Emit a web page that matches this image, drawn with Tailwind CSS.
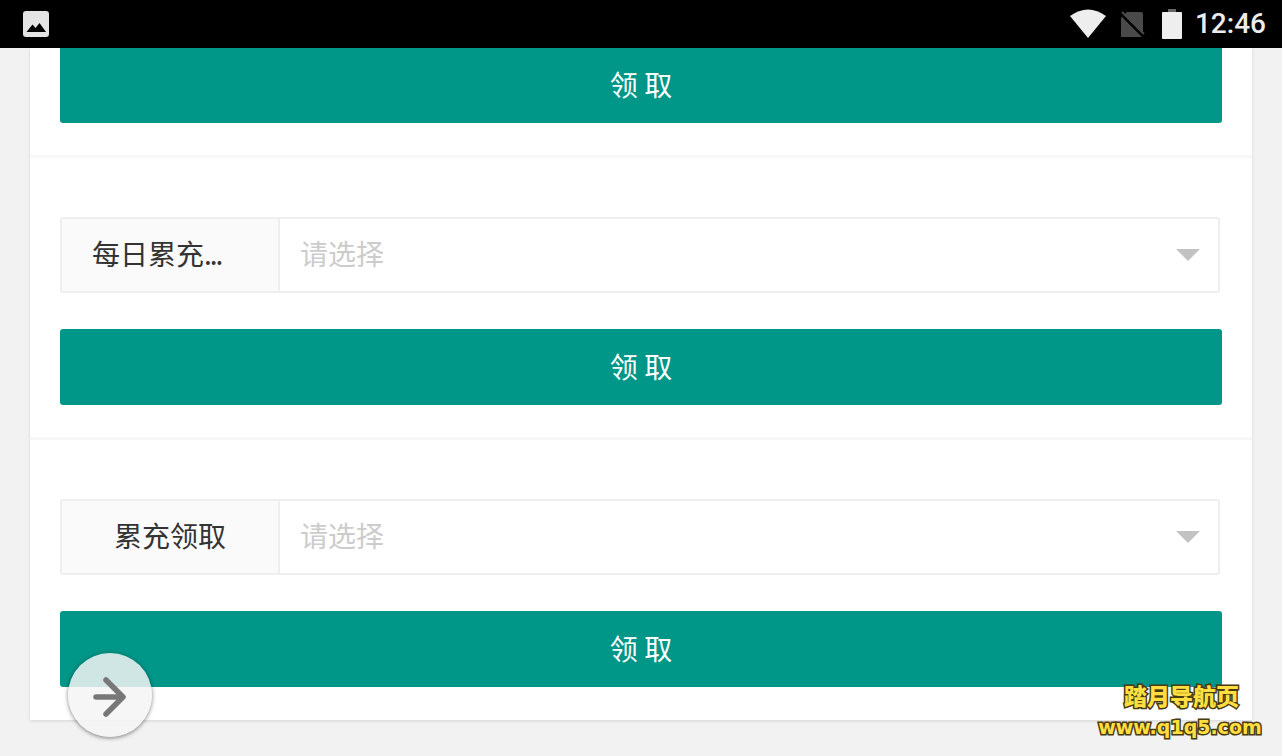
<!DOCTYPE html>
<html lang="en">

<head>
    <meta charset="UTF-8">
    <meta name="viewport" content="width=device-width, initial-scale=1.0">
    <title>领取</title>
    <script src="https://cdn.jsdelivr.net/npm/@tailwindcss/browser@4"></script>
</head>

<body class="bg-[#f2f2f2] h-[756px] overflow-hidden relative font-['Noto_Sans_CJK_SC',sans-serif]">
    <!-- status bar -->
    <div class="h-12 bg-black flex items-center pl-[23px] pr-4 relative z-10">
        <svg width="26" height="26" viewBox="0 0 26 26">
            <rect x="0" y="0" width="26" height="26" rx="3" fill="#e4e4e4" />
            <path d="M3.5 21 L9.5 13.5 L12.5 17 L16.5 12 L23 21 Z" fill="#000" />
        </svg>
        <svg class="ml-auto" width="36" height="30" viewBox="0 0 36 30">
            <path d="M0 7 Q18 -6 36 7 L18 29 Z" fill="#eeeeee" />
        </svg>
        <svg class="ml-[13px]" width="26" height="27" viewBox="0 0 26 27">
            <path d="M8 1 H22 Q24 1 24 3 V26 H2 V7 Z" fill="#4a4a4a" />
            <path d="M1 2 L25 26" stroke="#000" stroke-width="3" />
            <path d="M3 1 L25 23" stroke="#4a4a4a" stroke-width="2" />
        </svg>
        <svg class="ml-[17px]" width="20" height="30" viewBox="0 0 20 30">
            <path d="M6 0 H14 V3 H19 Q20 3 20 4 V29 Q20 30 19 30 H1 Q0 30 0 29 V4 Q0 3 1 3 H6 Z" fill="#eeeeee" />
            <rect x="6" y="0" width="8" height="3" fill="#666" />
        </svg>
        <span class="ml-[13px] text-[28px] leading-none text-[#ececec] font-medium font-['Roboto',sans-serif]">12:46</span>
    </div>

    <div class="mx-[30px] flex flex-col gap-[3px] bg-[#f7f7f7] shadow-[0_1px_3px_rgba(0,0,0,0.12)]">
        <div class="bg-white px-[30px] pb-8">
            <button class="w-[1162px] h-[75px] pb-[3px] bg-[#009688] rounded-b-[3px] text-white text-[28px]">领 取</button>
        </div>

        <div class="bg-white pl-[30px] pt-[59px] pb-8">
            <div class="flex w-[1160px] h-[76px] border-2 border-[#eeeeee] rounded-[3px]">
                <div class="w-[218px] pb-1 bg-[#fafafa] border-r-2 border-[#eeeeee] pl-[30px] flex items-center text-[28px] text-[#333]">每日累充<span class="tracking-[-2px]">...</span></div>
                <div class="flex-1 flex items-center pl-5 pr-[18px]">
                    <input readonly placeholder="请选择" class="flex-1 pb-1 text-[28px] placeholder-[#cccccc] outline-none">
                    <div class="w-0 h-0 border-x-12 border-x-transparent border-t-12 border-t-[#c2c2c2]"></div>
                </div>
            </div>
            <button class="mt-9 w-[1162px] h-[76px] pb-[3px] bg-[#009688] rounded-[3px] text-white text-[28px]">领 取</button>
        </div>

        <div class="bg-white pl-[30px] pt-[59px] pb-[33px]">
            <div class="flex w-[1160px] h-[76px] border-2 border-[#eeeeee] rounded-[3px]">
                <div class="w-[218px] pb-1 bg-[#fafafa] border-r-2 border-[#eeeeee] flex items-center justify-center text-[28px] text-[#333]">累充领取</div>
                <div class="flex-1 flex items-center pl-5 pr-[18px]">
                    <input readonly placeholder="请选择" class="flex-1 pb-1 text-[28px] placeholder-[#cccccc] outline-none">
                    <div class="w-0 h-0 border-x-12 border-x-transparent border-t-12 border-t-[#c2c2c2]"></div>
                </div>
            </div>
            <button class="mt-9 w-[1162px] h-[76px] pb-[3px] bg-[#009688] rounded-[3px] text-white text-[28px]">领 取</button>
        </div>
    </div>

    <!-- floating back button -->
    <div class="absolute left-[68px] top-[653px] w-[84px] h-[84px] pt-1 pl-1 rounded-full bg-[#f5f5f5]/85 shadow-[0_1px_4px_rgba(0,0,0,0.5)] flex items-center justify-center">
        <svg width="40" height="44" viewBox="0 0 40 44" fill="none" stroke="#787878" stroke-width="5.5" stroke-linecap="round" stroke-linejoin="round">
            <path d="M4 22 H30" />
            <path d="M14 5 L31 22 L14 39" />
        </svg>
    </div>

    <!-- watermark -->
    <div class="absolute left-[1097px] top-[680px] w-[166px] flex flex-col items-center font-black text-[#ffdf40] [-webkit-text-stroke:3px_#4a3a10] [paint-order:stroke_fill]">
        <span class="text-[23px] leading-[30px] pl-[3px]">踏月导航页</span>
        <span class="text-[19px] leading-[34px] font-['DejaVu_Sans',sans-serif] font-bold whitespace-nowrap">www.q1q5.com</span>
    </div>
</body>

</html>
